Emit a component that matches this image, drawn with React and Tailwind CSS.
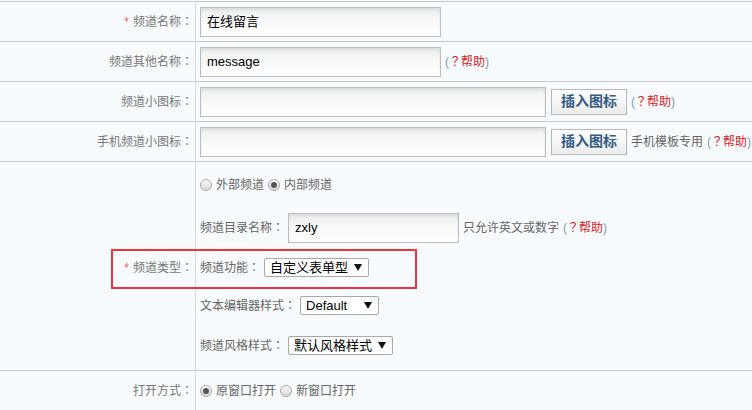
import React from 'react';

const font = "font-['Liberation_Sans','Noto_Sans_CJK_SC',sans-serif]";

// centred full-width colon, like the original's YaHei one
const Colon = () => <span className="font-['Noto_Sans_CJK_JP',sans-serif]">：</span>;

const Label = ({ required, children }) => (
    <span className="text-[12px] text-[#777]">
        {required && <span className="text-[#f55] mr-1">*</span>}
        {children}
        <Colon />
    </span>
);

const Help = () => (
    <span className="text-[12px] ml-1 whitespace-nowrap">
        <span className="text-[#7b9bb8]">(</span>
        <span className="text-[#e02020] font-['Noto_Sans_CJK_JP',sans-serif]">？</span>
        <span className="text-[#e02020]">帮助</span>
        <span className="text-[#7b9bb8]">)</span>
    </span>
);

const TextInput = ({ width, value }) => (
    <div
        className={`${width} h-[30px] border border-[#bdbdbd] bg-gradient-to-b from-[#eceeee] via-[#f8f9f9] to-white shadow-[inset_0_2px_3px_rgba(0,0,0,0.08)] flex items-center px-[6px] text-[13px] text-black`}
    >
        {value}
    </div>
);

const InsertButton = () => (
    <div className="ml-[5px] w-[76px] h-[26px] border border-[#b8b8b8] bg-gradient-to-b from-white to-[#ececec] flex items-center justify-center text-[14px] font-bold text-[#2f5b85]">
        插入图标
    </div>
);

const Select = ({ width, value }) => (
    <div
        className={`${width} h-[19px] border border-[#a9a9a9] bg-white rounded-[2px] flex items-center justify-between pl-[5px] pr-[6px] text-[13px] text-black`}
    >
        <span className="leading-none">{value}</span>
        <svg width="8" height="7" viewBox="0 0 8 7">
            <path d="M0 0 H8 L4 7 Z" fill="#111" />
        </svg>
    </div>
);

const Radio = ({ checked }) => (
    <span className="w-[12px] h-[12px] rounded-full border border-[#a8a8a8] bg-gradient-to-b from-[#fafafa] to-[#d8d8d8] flex items-center justify-center shrink-0">
        {checked && <span className="w-[6px] h-[6px] rounded-full bg-[#555]" />}
    </span>
);

const RadioItem = ({ checked, label }) => (
    <span className="flex items-center gap-[4px] mr-[4px]">
        <Radio checked={checked} />
        <span className="text-[12px] text-[#666]">{label}</span>
    </span>
);

const Row = ({ label, required, children }) => (
    <div className="flex border-b border-[#c6c9cb]">
        <div className="w-[196px] shrink-0 border-r border-[#d8dcdf] flex items-center justify-end pr-[2px] h-[39px]">
            {label && <Label required={required}>{label}</Label>}
        </div>
        <div className="flex-1 flex items-center pl-[4px] h-[39px]">{children}</div>
    </div>
);

const Hint = ({ children }) => (
    <span className="text-[12px] text-[#666] mr-[4px] whitespace-nowrap">
        {children}
        <Colon />
    </span>
);

const App = () => {
    return (
        <div className={`w-[752px] h-[410px] overflow-hidden bg-[#f7fbfd] pt-px relative ${font}`}>
            <div className="border-t border-[#c6c9cb]">
                <Row label="频道名称" required>
                    <TextInput width="w-[241px]" value="在线留言" />
                </Row>
                <Row label="频道其他名称">
                    <TextInput width="w-[241px]" value="message" />
                    <Help />
                </Row>
                <Row label="频道小图标">
                    <TextInput width="w-[346px]" value="" />
                    <InsertButton />
                    <Help />
                </Row>
                <Row label="手机频道小图标">
                    <TextInput width="w-[346px]" value="" />
                    <InsertButton />
                    <span className="text-[12px] text-[#666] ml-[4px] whitespace-nowrap">手机模板专用</span>
                    <Help />
                </Row>

                {/* channel type block */}
                <div className="flex border-b border-[#c6c9cb] h-[209px]">
                    <div className="w-[196px] shrink-0 border-r border-[#d8dcdf] pr-[2px] pt-[88px]">
                        <div className="h-[35px] flex items-center justify-end">
                            <Label required>频道类型</Label>
                        </div>
                    </div>
                    <div className="flex-1 pl-[4px] pt-[3px]">
                        <div className="h-[40px] flex items-center">
                            <RadioItem label="外部频道" />
                            <RadioItem checked label="内部频道" />
                        </div>
                        <div className="h-[45px] flex items-center">
                            <Hint>频道目录名称</Hint>
                            <TextInput width="w-[171px]" value="zxly" />
                            <span className="text-[12px] text-[#666] ml-[4px]">只允许英文或数字</span>
                            <Help />
                        </div>
                        <div className="h-[35px] flex items-center">
                            <Hint>频道功能</Hint>
                            <Select width="w-[105px]" value="自定义表单型" />
                        </div>
                        <div className="h-[40px] flex items-center">
                            <Hint>文本编辑器样式</Hint>
                            <Select width="w-[79px]" value="Default" />
                        </div>
                        <div className="h-[40px] flex items-center">
                            <Hint>频道风格样式</Hint>
                            <Select width="w-[105px]" value="默认风格样式" />
                        </div>
                    </div>
                </div>

                <Row label="打开方式">
                    <RadioItem checked label="原窗口打开" />
                    <RadioItem label="新窗口打开" />
                </Row>
            </div>

            {/* highlight annotation */}
            <div className="absolute left-[111px] top-[249px] w-[306px] h-[40px] border-2 border-[#ef3338] pointer-events-none" />
        </div>
    );
};

export default App;
